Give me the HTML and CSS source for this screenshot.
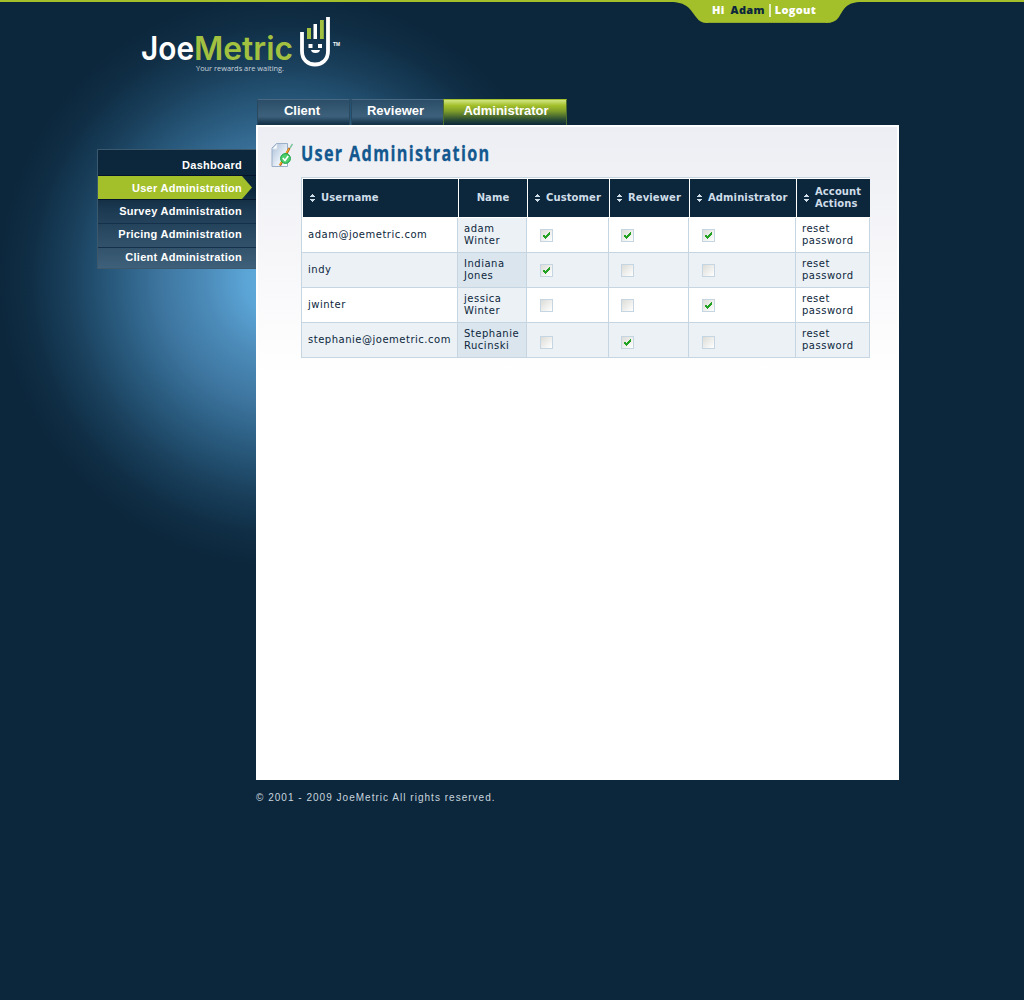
FILE: index.html
```html
<!DOCTYPE html>
<html lang="en">
<head>
<meta charset="utf-8">
<title>JoeMetric - User Administration</title>
<link rel="stylesheet" href="styles.css">
</head>
<body>
<svg class="sprites" width="0" height="0">
  <defs>
    <linearGradient id="paper" x1="0" y1="0" x2="1" y2="1"><stop offset="0" stop-color="#a9bdd6"/><stop offset=".6" stop-color="#e6eef7"/><stop offset="1" stop-color="#fff"/></linearGradient>
    <symbol id="tick" viewBox="0 0 13 13"><path d="M3 6h2v1h1v-1h1v-1h1v-1h1v-1h1v3h-1v1h-1v1h-1v1h-1v1h-1v-1h-1v-1h-1z" fill="#22a122"/></symbol>
    <symbol id="sort" viewBox="0 0 6 8"><path d="M0 3h5V2H4V1H3V0H2v1H1v1H0zM0 5h5v1H4v1H3v1H2V7H1V6H0z" fill="#cfdde8"/></symbol>
  </defs>
</svg>
<div class="page">
  <header class="header">
    <svg class="userbar-shape" width="192" height="24" viewBox="0 0 192 24"><path d="M0 0H192V2C176 2 174 9 169 17Q165 23 156 23H37Q30 23 26 17C20 9 17 2 0 2z" fill="#a3c02b"/><path d="M38 22.500H156" stroke="#8da92a"/></svg>
    <div class="userbar"><span>Hi</span><a class="me">Adam</a><i></i><a>Logout</a></div>
    <svg class="logo" width="210" height="66" viewBox="0 0 210 66">
      <text class="logo-word" x="1" y="45" textLength="53" lengthAdjust="spacingAndGlyphs" fill="#fff">Joe</text>
      <text class="logo-word" x="54" y="45" textLength="99" lengthAdjust="spacingAndGlyphs" fill="#a3c140">Metric</text>
      <text class="logo-tag" x="56" y="56" textLength="88" lengthAdjust="spacingAndGlyphs">Your rewards are waiting.</text>
      <path d="M162 17V36C162 45 168 49.500 175 49.500S188 45 188 36V2" fill="none" stroke="#fff" stroke-width="3.800"/>
      <path d="M167 13h4v11h-4zM180 5h3.800v19H180z" fill="#a3c140"/>
      <path d="M173.500 9h3.500v15h-3.500zM168.500 29h4v4h-4zM178 29h4v4h-4zM171 35h9q-.5 3-4.500 3t-4.500-3z" fill="#fff"/>
      <text class="logo-tm" x="193" y="31" textLength="7" lengthAdjust="spacingAndGlyphs">TM</text>
    </svg>
    <nav class="tabs">
      <a class="tab">Client</a><a class="tab">Reviewer</a><a class="tab active">Administrator</a>
    </nav>
  </header>
  <div class="body">
    <nav class="side">
      <a>Dashboard</a>
      <a class="current">User Administration</a>
      <a>Survey Administration</a>
      <a>Pricing Administration</a>
      <a>Client Administration</a>
    </nav>
    <main class="panel">
      <div class="title">
        <svg width="23" height="26" viewBox="0 0 23 26">
          <path d="M1 6L5.500 1.500H16.500V24.500H1z" fill="url(#paper)" stroke="#9aafc8"/>
          <path d="M1.500 7H6V2" fill="#fff" stroke="#d5dfea"/>
          <path d="M9 23.500L18.500 6" stroke="#a5491e" stroke-width="2.200"/><path d="M8.700 23L18 6.500" stroke="#f5b31d" stroke-width="1.300"/><path d="M19 6L21.500 2" stroke="#7fc7a0" stroke-width="1.500"/>
          <circle cx="14.500" cy="16.500" r="4.900" fill="#4fce6e" stroke="#15a03f"/><path d="M11.800 16L14 18.500L17.200 14" fill="none" stroke="#fff" stroke-width="1.600"/>
        </svg>
        <h1>User Administration</h1>
      </div>
      <table class="users">
        <colgroup><col class="c1"><col class="c2"><col class="c3"><col class="c4"><col class="c5"><col class="c6"></colgroup>
        <thead><tr>
          <th><div><svg><use href="#sort"/></svg><span>Username</span></div></th>
          <th class="plain">Name</th>
          <th><div><svg><use href="#sort"/></svg><span>Customer</span></div></th>
          <th><div><svg><use href="#sort"/></svg><span>Reviewer</span></div></th>
          <th><div><svg><use href="#sort"/></svg><span>Administrator</span></div></th>
          <th><div><svg><use href="#sort"/></svg><span>Account<br>Actions</span></div></th>
        </tr></thead>
        <tbody>
          <tr><td>adam@joemetric.com</td><td class="name">adam<br>Winter</td><td><b class="box"><svg><use href="#tick"/></svg></b></td><td><b class="box"><svg><use href="#tick"/></svg></b></td><td><b class="box"><svg><use href="#tick"/></svg></b></td><td>reset<br>password</td></tr>
          <tr><td>indy</td><td class="name">Indiana<br>Jones</td><td><b class="box"><svg><use href="#tick"/></svg></b></td><td><b class="box"></b></td><td><b class="box"></b></td><td>reset<br>password</td></tr>
          <tr><td>jwinter</td><td class="name">jessica<br>Winter</td><td><b class="box"></b></td><td><b class="box"></b></td><td><b class="box"><svg><use href="#tick"/></svg></b></td><td>reset<br>password</td></tr>
          <tr class="last"><td>stephanie@joemetric.com</td><td class="name">Stephanie<br>Rucinski</td><td><b class="box"></b></td><td><b class="box"><svg><use href="#tick"/></svg></b></td><td><b class="box"></b></td><td>reset<br>password</td></tr>
        </tbody>
      </table>
    </main>
  </div>
  <footer class="footer">© 2001 - 2009 JoeMetric All rights reserved.</footer>
</div>
</body>
</html>
```
FILE: styles.css
```css
* { box-sizing: border-box; }
body { margin: 0; background: #0c273c; font-family: "Liberation Sans", Arial, sans-serif; }
.sprites { position: absolute; }
.page {
  position: relative;
  height: 1000px;
  padding-left: 97px;
  border-top: 2px solid #a3c02b;
  background: radial-gradient(circle 288px at 286px 278px, #60aee0 0%, #5ba5d6 14%, #4c8bb9 28%, #3d759f 44%, #295a7d 60%, #193f5b 76%, #0f2d44 90%, #0c273c 100%);
}
.header { height: 123px; display: flex; flex-direction: column; }
.userbar-shape { position: absolute; left: 670px; top: -2px; }
.userbar { position: absolute; left: 712px; top: 1px; display: flex; font: 800 11px/14px "Open Sans", sans-serif; color: #fff; letter-spacing: .3px; }
.userbar .me { color: #0c273c; margin-left: 6px; }
.userbar i { width: 2px; height: 13px; background: #e4edc0; margin: 1px 4px 0; }
.logo { margin: 13px 0 0 43px; flex: none; }
.logo-word { font: 600 32px Inter, sans-serif; }
.logo-tag { font: 8px "Open Sans", sans-serif; fill: #c9d5de; }
.logo-tm { font: bold 6px "Liberation Sans", sans-serif; fill: #fff; }
.tabs { display: flex; margin: 18px 0 0 160px; height: 26px; }
.tab { width: 93px; margin-right: 1px; border: 1px solid #294961; border-top-color: #486981; border-bottom: 0; background: linear-gradient(#2b4d67, #3d617c 65%, #16334a 95%); color: #fff; font-weight: bold; font-size: 13px; line-height: 22px; text-align: center; padding-right: 3px; }
.tab + .tab { padding-right: 4px; }
.tab.active { width: 124px; margin-left: -1px; padding: 0 0 0 2px; margin-right: 0; border-color: #a3c02b #4c6f30 #17364a; background: linear-gradient(#d2e583, #a3c02b 22%, #7d9c2b 45%, #2b4d33 78%, #0c273c); position: relative; left: -1px; }
.body { display: flex; align-items: flex-start; }
.side { width: 159px; height: 120px; margin-top: 24px; border: 1px solid #3c586d; border-right: 0; background: linear-gradient(#0c273c 35%, #1b3951 50%, #3f607a); text-align: right; }
.side a { display: block; height: 24px; padding-right: 14px; font-weight: bold; font-size: 11px; line-height: 21px; letter-spacing: .28px; color: #fff; border-top: 1px solid #14304a; }
.side a:first-child { height: 25px; border: 0; line-height: 31px; }
.side .current { border-top: 1px solid #04142a; position: relative; z-index: 0; line-height: 24px; }
.side .current::before { content: ""; position: absolute; z-index: -1; inset: 0 4px 0 0; background: #a3c02b; clip-path: polygon(0 0, 144px 0, 100% 50%, 144px 100%, 0 100%); }
.side .current + a { border-top-color: #04142a; line-height: 23px; }
.side a:last-child { line-height: 19px; }
.panel { width: 643px; height: 655px; border: 2px solid #fff; background: linear-gradient(#edeef3, #fff 250px); }
.title { display: flex; gap: 8px; padding: 15px 0 0 13px; height: 50px; }
h1 { margin: -4px 0 0 -1px; font: 700 22px/28px "Open Sans", sans-serif; color: #13588f; letter-spacing: 1.8px; white-space: nowrap; -webkit-text-stroke: .3px #13588f; transform: scaleX(.737); transform-origin: 0 0; }
.users { table-layout: fixed; width: 569px; margin-left: 43px; border-spacing: 0; border: 1px solid #c5d5e2; border-right: 0; border-bottom: 0; font: 10px/12px "DejaVu Sans", Verdana, sans-serif; letter-spacing: .51px; color: #0c273c; background: #fff; }
.c1 { width: 156px; } .c2 { width: 69px; } .c3 { width: 82px; } .c4 { width: 80px; } .c5 { width: 107px; } .c6 { width: 74px; }
.users th { height: 40px; padding: 0; border: 1px solid #fff; border-right: 0; background: #0c273c; color: #cfdde8; text-align: left; letter-spacing: .1px; }
.users th div { display: flex; align-items: center; gap: 5px; padding-left: 7px; }
.users th svg { width: 6px; height: 8px; flex: none; }
.users .plain { text-align: center; }
.users td { height: 35px; padding: 0 0 1px 6px; border: solid #c5d5e2; border-width: 0 1px 1px 0; background: #fff; }
.users .name { background: #ebf1f5; }
.users tr:nth-child(even) td { background: #ebf1f5; }
.users tr:nth-child(even) .name { background: #dbe5ee; }
.box { display: block; width: 13px; height: 13px; margin: 2px 0 0 7px; border: 1px solid #c5d5e2; background: linear-gradient(135deg, #dcdcd8, #fff); }
td:nth-child(4) .box { margin-left: 6px; }
.last .box { margin-top: 5px; }
.box svg { display: block; width: 13px; height: 13px; margin: -1px; }
.footer { margin: 12px 0 0 159px; font-size: 10px; line-height: 12px; letter-spacing: 1.02px; color: #c9d5de; }
```
